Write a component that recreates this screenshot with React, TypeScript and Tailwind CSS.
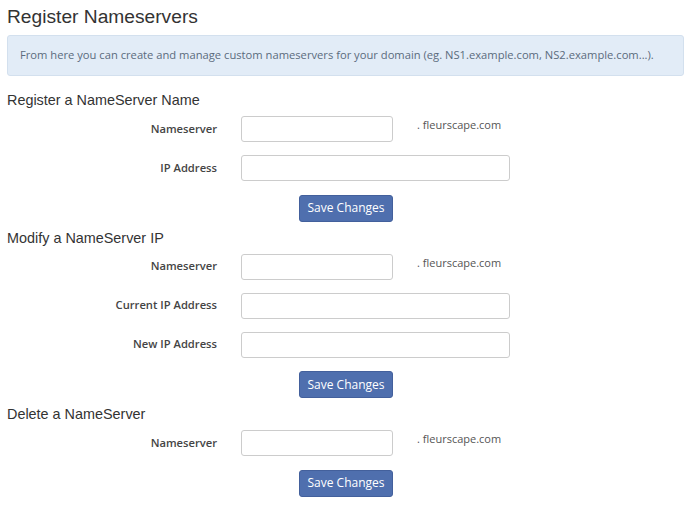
import React from "react";

const sans = { fontFamily: '"Open Sans", "Liberation Sans", sans-serif' };

function Row({ label, wide, suffix }: { label: string; wide?: boolean; suffix?: boolean }) {
  return (
    <div className="flex items-center h-[26px]">
      <div className="w-[217px] text-right text-[11.2px] font-semibold text-[#444]" style={sans}>
        {label}
      </div>
      <input
        className={`ml-[24px] h-[26px] ${wide ? "w-[269px]" : "w-[152px]"} border border-[#ccc] rounded-[3px] bg-white`}
        type="text"
      />
      {suffix && (
        <div className="ml-[24px] self-start pt-[1px] text-[11px] text-[#555]" style={sans}>
          . fleurscape.com
        </div>
      )}
    </div>
  );
}

function Btn() {
  return (
    <div className="mt-[13px] ml-[299px]">
      <button
        className="h-[27px] w-[94px] rounded-[3px] bg-[#4f6fae] border border-[#43609c] text-white text-[12px] leading-none"
        style={sans}
      >
        Save Changes
      </button>
    </div>
  );
}

function Heading({ children }: { children: React.ReactNode }) {
  return (
    <h3 className="text-[14.4px] leading-[17px] text-[#333]" style={{ fontFamily: '"Liberation Sans", Arial, sans-serif' }}>
      {children}
    </h3>
  );
}

export default function App() {
  return (
    <div className="w-[694px] h-[509px] bg-white pl-[7px] pr-[10px] pt-[5px]">
      <h1 className="text-[19.2px] leading-[24px] text-[#333]" style={{ fontFamily: '"Liberation Sans", Arial, sans-serif' }}>
        Register Nameservers
      </h1>
      <div
        className="mt-[6px] h-[41px] flex items-center pl-[12px] bg-[#e2ecf7] border border-[#d3e0ee] rounded-[3px] text-[11.2px] text-[#5b6b7d]"
        style={sans}
      >
        From here you can create and manage custom nameservers for your domain (eg. NS1.example.com, NS2.example.com...).
      </div>

      <div className="mt-[16px]">
        <Heading>Register a NameServer Name</Heading>
      </div>
      <div className="mt-[7px] -ml-[7px] flex flex-col gap-[13px]">
        <Row label="Nameserver" suffix />
        <Row label="IP Address" wide />
      </div>
      <div className="-ml-[7px]">
        <Btn />
      </div>

      <div className="mt-[8px]">
        <Heading>Modify a NameServer IP</Heading>
      </div>
      <div className="mt-[7px] -ml-[7px] flex flex-col gap-[13px]">
        <Row label="Nameserver" suffix />
        <Row label="Current IP Address" wide />
        <Row label="New IP Address" wide />
      </div>
      <div className="-ml-[7px]">
        <Btn />
      </div>

      <div className="mt-[8px]">
        <Heading>Delete a NameServer</Heading>
      </div>
      <div className="mt-[7px] -ml-[7px] flex flex-col gap-[13px]">
        <Row label="Nameserver" suffix />
      </div>
      <div className="-ml-[7px]">
        <Btn />
      </div>
    </div>
  );
}
